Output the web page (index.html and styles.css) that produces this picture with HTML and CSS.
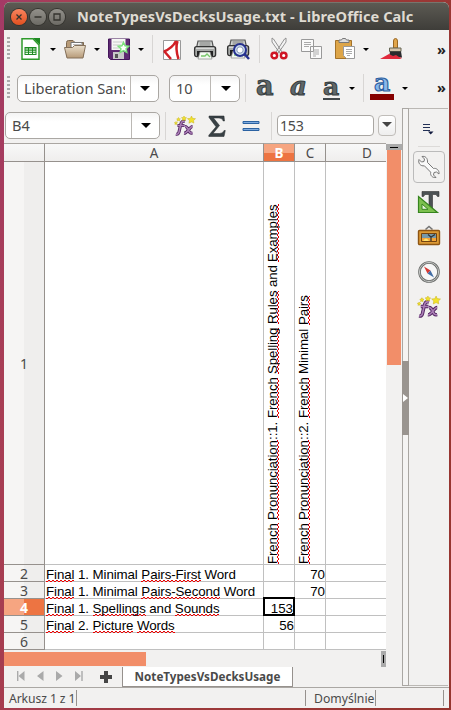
FILE: index.html
```html
<!DOCTYPE html>
<html lang="pl">
<head>
<meta charset="utf-8">
<title>NoteTypesVsDecksUsage.txt - LibreOffice Calc</title>
<link rel="stylesheet" href="styles.css">
</head>
<body>
<svg class="defs" width="0" height="0">
  <defs>
    <linearGradient id="tan" x2="0" y2="1"><stop stop-color="#eadfcb"/><stop offset="1" stop-color="#b79a78"/></linearGradient>
    <symbol id="fx" viewBox="0 0 22 22">
      <path d="M11 6.500c-3-1-4 1-4.500 4l-1.500 6.500c-.5 2-1.500 2.500-3 2M3.500 10.500h7M11 11.500c2 0 2.500 1 3.500 3.500s1.500 3.500 4 3M18.500 11.500c-3 0-5 7-8.500 6.700" fill="none" stroke="#512360" stroke-width="3.200"/>
      <path d="M11 6.500c-3-1-4 1-4.500 4l-1.500 6.500c-.5 2-1.500 2.500-3 2M3.500 10.500h7M11 11.500c2 0 2.500 1 3.500 3.500s1.500 3.500 4 3M18.500 11.500c-3 0-5 7-8.500 6.700" fill="none" stroke="#aa7fb6" stroke-width="1.500"/>
      <path d="M17.500 1l1 2.300 3 .4-2 1.900.4 2.500-2.400-1.200-2.600 1.300.5-2.600-2-2 2.900-.2zM10 1l.8 1.500 1.700.3-1.200 1.100.2 1.600L10 4.800l-1.600.7.300-1.700L7.500 2.700l1.800-.3zM4.500 2.500l.6 1.200 1.300.2-1 .9.200 1.300-1.200-.6-1.100.6.200-1.300-.9-.9 1.300-.2zM2 6.500l.5 1 1 .1-.8.8.2 1.100-1-.5-1 .5.200-1.100-.7-.8 1.100-.2z" fill="#f2e22c" stroke="#c9b41c" stroke-width=".5"/>
    </symbol>
    <symbol id="printer" viewBox="0 0 24 24">
      <path d="M5 3h14l1.500 7h-17z" fill="#d5d8d5" stroke="#555" stroke-width="1.200"/><path d="M6.500 5h11M6.500 7h11" stroke="#777"/>
      <rect x="1.600" y="8.600" width="21" height="10" rx="2" fill="#a8aaa8" stroke="#333" stroke-width="1.300"/>
      <path d="M3 10.200h18" stroke="#eee"/><path d="M4 13h16v5H4z" fill="#222"/><path d="M7 14h10l2 7H5z" fill="#f5faf3" stroke="#888" stroke-width=".7"/><path d="M8 18h4l2-2 3 3" fill="none" stroke="#77c66a" stroke-width="1.300"/>
    </symbol>
  </defs>
</svg>
<main class="window">
  <header class="titlebar">
    <span class="wbtn close"><svg viewBox="0 0 16 16"><path d="M5.500 5.500l5 5M10.500 5.500l-5 5"/></svg></span>
    <span class="wbtn"><svg viewBox="0 0 16 16"><path d="M4.500 8h7"/></svg></span>
    <span class="wbtn"><svg viewBox="0 0 16 16"><path d="M5 5h6v6H5z"/></svg></span>
    <h1>NoteTypesVsDecksUsage.txt - LibreOffice Calc</h1>
  </header>

  <div class="toolbar standard">
    <i class="grip"></i>
    <svg viewBox="0 0 24 24"><path d="M3 1.700h11L20 8v14.300H3z" fill="#fff" stroke="#2f9a2b" stroke-width="1.500"/><path d="M14 1h7v7z" fill="#1f8a22"/><path d="M5.500 10h12v8h-12z" fill="#1f8a22"/><path d="M6.500 12h2.500M10 12h3M14 12h2.500M6.500 14.200h2.500M10 14.200h3M14 14.200h2.500M6.500 16.400h2.500M10 16.400h3M14 16.400h2.500" stroke="#eaffea" stroke-width="1.100"/></svg>
    <i class="arrow"></i>
    <svg viewBox="0 0 24 24"><path d="M3.500 19V5.500q0-2 2-2H10l2 2h8.500V19z" fill="#b89b78" stroke="#7d684f"/><path d="M8 5.500h11v7H8z" fill="#fff" stroke="#777"/><path d="M10 7.500h8" stroke="#bbb"/><path d="M1.500 10.500h8l2-2h11L20 21H4z" fill="url(#tan)" stroke="#84705a"/></svg>
    <i class="arrow"></i>
    <svg viewBox="0 0 24 24"><path d="M1.500 2h21v20.500h-19l-2-2z" fill="#5f2a72" stroke="#44165a"/><path d="M4.500 2h14v11h-14z" fill="#f7f7f5"/><path d="M6 5h11M6 8h8M6 11h6" stroke="#c9c9c9"/><path d="M6 15h11v7H6z" fill="#c9c9c9"/><path d="M8 17h3v4H8z" fill="#555"/><path d="M16.500 5.500l1.600 3.300 3.600.5-2.600 2.500.7 3.600-3.300-1.700-3.300 1.700.7-3.600-2.600-2.500 3.600-.5z" fill="#fff" stroke="#7be07b" stroke-width="1.500"/></svg>
    <i class="arrow"></i>
    <i class="sep"></i>
    <svg viewBox="0 0 24 24"><path d="M3.500 3.500h17v19h-17z" fill="#fff" stroke="#999"/><path d="M4 14.500C10 12 14 8 16 4M4 14l7 8M17.500 4c-2 6-1 12 1 18" fill="none" stroke="#d12026" stroke-width="2.500"/></svg>
    <svg viewBox="0 0 24 24"><use href="#printer" width="24" height="24" y="1"/></svg>
    <svg viewBox="0 0 24 24"><use href="#printer" width="24" height="24"/><circle cx="14" cy="13" r="6" fill="#cfe0f4" fill-opacity=".9" stroke="#26318f" stroke-width="2"/><circle cx="14" cy="13" r="3.200" fill="#fff" stroke="#8396b8"/><path d="M18.500 17l4.500 5" stroke="#26318f" stroke-width="2.500"/></svg>
    <i class="sep"></i>
    <svg viewBox="0 0 24 24"><path d="M5 1l1.500 1L15 15l-2 1.500L5 5zM19 1l-1.500 1L9 15l2 1.500L19 5z" fill="#f4f4f4" stroke="#888" stroke-width=".9"/><circle cx="7.300" cy="18.500" r="2.800" fill="#fff" stroke="#cf1524" stroke-width="2.400"/><circle cx="16.700" cy="18.500" r="2.800" fill="#fff" stroke="#cf1524" stroke-width="2.400"/></svg>
    <svg viewBox="0 0 24 24"><g fill="#fafafa" stroke="#999"><path d="M1.500 2.500h12v12h-12zM10.500 9.500h11v12h-11z"/></g><path d="M4 5.500h7M4 7.500h7M4 9.500h5M13 13h6M13 15h6M13 17h6M13 19h3" stroke="#aaa"/></svg>
    <svg viewBox="0 0 24 24"><path d="M2.500 3.500h16v18h-16z" fill="#dda548" stroke="#a3722a"/><path d="M6 5V3h2.500l1-1.500h3L13.500 3H16v2.500H6z" fill="#ddd" stroke="#777"/><path d="M10.500 9.500h11v12h-8l-3-3z" fill="#fff" stroke="#999"/><path d="M13 12.500h6M13 14.500h6M13 16.500h6M14 18.500h3" stroke="#aaa"/></svg>
    <i class="arrow"></i>
    <svg viewBox="0 0 24 24"><path d="M13.500 11V4q0-2.500 2-2.500T17.500 4v7z" fill="#e1a54b" stroke="#9a6722"/><path d="M9.500 11h11.500v3.500H9.500z" fill="#d4c3aa" stroke="#665"/><path d="M10 14.500h11l1 6H9z" fill="#2a2a2d"/><path d="M9 17l4 2 3-1 3 2 3 1-2 1H0z" fill="#e12a3c"/></svg>
    <b class="more">»</b>
  </div>

  <div class="toolbar format">
    <i class="grip"></i>
    <div class="combo family"><span><em>Liberation Sans</em></span><i class="arrow big"></i></div>
    <div class="combo size"><span><em>10</em></span><i class="arrow big"></i></div>
    <i class="sep"></i>
    <span class="glyph bold">a</span>
    <span class="glyph ital">a</span>
    <span class="glyph under">a</span>
    <i class="arrow"></i>
    <i class="sep"></i>
    <span class="glyph color">a</span>
    <i class="arrow"></i>
    <b class="more">»</b>
  </div>

  <div class="workspace">
    <section class="main">
      <div class="formula">
        <div class="combo name"><span><em>B4</em></span><i class="arrow big"></i></div>
        <i class="sep"></i>
        <svg class="fx"><use href="#fx"/></svg>
        <svg class="sigma" viewBox="0 0 18 22"><path d="M1 1h15l.5 5h-1.300Q14.500 3 11 3H5.500l6 7.500L5 18.500h6.500q3.500 0 4.500-3h1.300L16 21.500H.8v-1.300L8 11.800 1 2.500z" fill="#394145" stroke="#242a2d" stroke-width=".5"/></svg>
        <svg class="equal" viewBox="0 0 18 12"><path d="M1 1.500h16v2H1zM1 8.500h16v2H1z" fill="#7fabdf" stroke="#2b62a2"/></svg>
        <i class="sep"></i>
        <div class="entry">153</div>
        <div class="drop"><i class="arrow big"></i></div>
      </div>
      <div class="sheet">
        <div class="grid">
          <div class="hd corner"></div><div class="hd">A</div><div class="hd sel">B</div><div class="hd">C</div><div class="hd cut">D</div>
          <div class="rh">1</div><div class="c"></div>
          <div class="c up"><p><u>French</u> <u>Pronunciation</u>::1. <u>French</u> <u>Spelling</u> <u>Rules</u> and <u>Examples</u></p></div>
          <div class="c up"><p><u>French</u> <u>Pronunciation</u>::2. <u>French</u> Minimal <u>Pairs</u></p></div><div class="c"></div>
          <div class="rh">2</div><div class="c t"><u>Final</u> 1. Minimal <u>Pairs-First</u> Word</div><div class="c"></div><div class="c n">70</div><div class="c"></div>
          <div class="rh">3</div><div class="c t"><u>Final</u> 1. Minimal <u>Pairs-Second</u> Word</div><div class="c"></div><div class="c n">70</div><div class="c"></div>
          <div class="rh sel">4</div><div class="c t"><u>Final</u> 1. <u>Spellings</u> and <u>Sounds</u></div><div class="c n active">153</div><div class="c"></div><div class="c"></div>
          <div class="rh">5</div><div class="c t"><u>Final</u> 2. <u>Picture</u> <u>Words</u></div><div class="c n">56</div><div class="c"></div><div class="c"></div>
          <div class="rh">6</div><div class="c"></div><div class="c"></div><div class="c"></div><div class="c"></div>
        </div>
        <div class="vscroll"><div class="vsplit"></div><div class="vthumb"></div></div>
      </div>
      <div class="hscroll"><div class="hthumb"></div><div class="hsplit"></div></div>
      <nav class="tabs">
        <svg viewBox="0 0 82 14"><path d="M9.500 2v10L3.500 7zM28.500 2v10L22 7zM41 2v10l6.500-5zM60 2v10l6-5z" fill="#aaa"/><path d="M2.700 2v10M67 2v10" stroke="#aaa" stroke-width="1.400"/></svg>
        <svg class="plus" viewBox="0 0 14 14"><path d="M5 1h4v4h4v4H9v4H5V9H1V5h4z" fill="#454545"/></svg>
        <span class="tab">NoteTypesVsDecksUsage</span>
      </nav>
    </section>
    <div class="gutter"><div class="handle"></div></div>
    <aside class="side">
      <svg class="menu" viewBox="0 0 14 12"><path d="M1 1.500h7M1 4.500h7M1 7.500h7" stroke="#223056" stroke-width="1"/><path d="M6 8.500h5.500L8.700 11.500z" fill="#10193d"/></svg>
      <hr>
      <div class="deck on"><svg viewBox="0 0 24 24"><path d="M2 4.500L4.500 7 7 6.500 7.500 4 5 1.500C8 .8 11 3 10.500 7.500l6 6c3-.8 6 2 5.500 5.500L19.500 17l-2.500.5-.5 2.500 2.500 2.500c-3.500.5-6-2-5.300-5.300l-6.300-6.400C3.500 11.500.8 8 2 4.500z" fill="#fafafa" stroke="#777"/></svg></div>
      <div class="deck"><svg viewBox="0 0 24 24"><path d="M5 1.500h17v5h-1.500L19 4.500h-3.500v14l1.500 1.500h-6l1-1.500v-14H8L6.500 6.500H5z" fill="#4c5254" stroke="#333" stroke-width=".6"/><path d="M1.500 6.500v16h19z" fill="#7cc04e" stroke="#37851f" stroke-width="1.200"/><path d="M5 14v5.300h6z" fill="#e9f5df" stroke="#37851f"/></svg></div>
      <div class="deck"><svg viewBox="0 0 24 24"><path d="M8.500 4.500l3.500-3 3.500 3" fill="none" stroke="#777" stroke-width="1.600"/><rect x="1.500" y="5.500" width="21" height="14" rx="1" fill="#dd9a35" stroke="#8d5412" stroke-width="1.400"/><path d="M4.500 8.500h15v8h-15z" fill="#7698a9" stroke="#73430f"/><path d="M5 13h14v3H5z" fill="#f4a437"/><path d="M6 16q3-5 6 0" fill="#ffe16b"/><path d="M14 16v-4l-3-2.500M14 12l4-2.500" stroke="#333" stroke-width="1.300" fill="none"/></svg></div>
      <div class="deck"><svg viewBox="0 0 24 24"><circle cx="12" cy="12" r="9.500" fill="#f7f7f7" stroke="#696b69" stroke-width="2.600"/><circle cx="12" cy="12" r="9.600" fill="none" stroke="#c7c9c7"/><path d="M7 6.500l6.500 4-3 3z" fill="#d73832"/><path d="M17 17.500l-6.500-4 3-3z" fill="#426da5"/></svg></div>
      <div class="deck"><svg><use href="#fx"/></svg></div>
    </aside>
  </div>
  <footer class="status"><span class="s1">Arkusz 1 z 1</span><span class="s2"></span><span class="s3">Domyślnie</span><span class="s4"></span></footer>
</main>
</body>
</html>
```
FILE: styles.css
```css
* { box-sizing: border-box; }
body { margin: 0; width: 451px; height: 710px; padding: 2px 2px 2px 4px; overflow: hidden; background: linear-gradient(100deg, #a33a66 0, #a83e55 12%, #9c3838 60%, #96352f 100%); font-family: "Noto Sans", sans-serif; color: #4a4a4a; }
.defs { display: block; position: absolute; }
svg { display: block; }
p, h1 { margin: 0; }
.window { height: 706px; display: flex; flex-direction: column; background: #f2f1f0; border-radius: 6px 6px 0 0; overflow: hidden; }
.titlebar { height: 28px; flex: none; display: flex; align-items: center; padding-left: 7px; background: linear-gradient(#5c5a53, #3e3d39); border-top: 1px solid #77756d; }
.wbtn { width: 16px; height: 16px; margin-right: 3px; border-radius: 50%; background: linear-gradient(#92908a, #6d6b65); box-shadow: 0 0 0 1px #35342f; }
.wbtn path { fill: none; stroke: #34332e; stroke-width: 1.3; }
.wbtn.close { background: linear-gradient(#f8845f, #e2501f); }
h1 { margin-left: 9px; font: bold 14.6px/27px "Noto Sans", sans-serif; color: #dfdbd2; white-space: nowrap; letter-spacing: .05px; }

.toolbar { flex: none; display: grid; align-items: center; }
.toolbar > svg { width: 24px; height: 24px; }
.standard { height: 38px; grid-template-columns: 15px 31px 13px 31px 13px 31px 14px 8px 33px 33px 33px 8px 33px 33px 30px 17px 57px 1fr; }
.format { height: 40px; grid-template-columns: 13px 152px 76px 11px 34px 33px 26px 14px 7px 32px 35px 1fr; }
.grip { width: 3px; height: 24px; margin-left: 3px; background: repeating-linear-gradient(#aaa 0 2px, transparent 2px 4px); }
.arrow { width: 0; height: 0; border: 3px solid transparent; border-top-color: #000; border-bottom: 0; }
.arrow.big { border-width: 5px 5px 0; }
.sep { width: 1px; height: 28px; background: #d8d6d4; }
.more { font-size: 14.5px; line-height: 20px; color: #222; }
.format .more { margin-top: -3px; }
.combo { height: 27px; display: flex; border: 1px solid #aaa7a3; border-radius: 5px; background: linear-gradient(#f4f4f4, #fff 35%); overflow: hidden; }
.combo span { flex: 1; min-width: 0; padding: 0 5px 0 6px; border-right: 1px solid #bbb8b4; font-size: 14.6px; line-height: 25px; }
.combo em { display: block; overflow: hidden; white-space: nowrap; font-style: normal; }
.combo .arrow { margin: 10px 8px 0 9px; }
.family { width: 142px; }
.size { width: 71px; }
.size .arrow { margin-left: 10px; }
.name { width: 155px; }
.glyph { font: bold 27px/24px "DejaVu Serif", serif; width: 20px; height: 26px; color: #5f6769; -webkit-text-stroke: 1px #363d40; }
.bold, .ital { transform: translateY(-1px); }
.ital { font-size: 26px; font-style: italic; }
.under { width: 17px; height: 23px; font-size: 25px; line-height: 19px; border-bottom: 2px solid #42484b; }
.color { width: 24px; height: 25px; padding-left: 4px; line-height: 15px; font-size: 25px; color: #8ab8ea; -webkit-text-stroke: 1.1px #2d5f9f; border-bottom: 6px solid #850000; transform: translateY(-1px); }

.workspace { flex: 1; min-height: 0; display: grid; grid-template-columns: 398px 7px 1fr; }
.main { display: flex; flex-direction: column; }
.formula { height: 35px; flex: none; display: flex; align-items: center; padding-left: 1px; }
.formula .sep { margin-left: 5px; }
.fx { width: 22px; height: 22px; margin: 0 12px 0 8px; }
.sigma { width: 18px; height: 22px; margin-right: 16px; }
.equal { width: 18px; height: 12px; margin-right: 6px; }
.entry { width: 97px; height: 21px; margin: 0 4px 0 5px; padding-left: 2px; border: 1px solid #aaa7a3; border-radius: 4px; background: #fff; font-size: 14.2px; line-height: 19px; letter-spacing: -.3px; }
.drop { width: 18px; height: 21px; padding: 6px 3px; border: 1px solid #c0bdb9; border-radius: 4px; background: linear-gradient(#fff, #eee); }
.drop .arrow { display: block; border-top-color: #444; }

.sheet { display: flex; height: 507px; flex: none; }
.grid { width: 382px; display: grid; grid-template-columns: 41px 219px 31px 31px 60px; grid-template-rows: 19px 403px repeat(5, 17px); }
.hd, .rh { display: flex; align-items: center; justify-content: center; font-size: 14px; line-height: 16px; color: #4a4a4a; border-right: 1px solid #96918d; border-bottom: 1px solid #96918d; background: linear-gradient(#f8f8f8, #efeeed); }
.hd { border-top: 1px solid #aaa6a2; font-size: 13.5px; }
.hd.cut { padding-left: 22px; border-right: 0; }
.rh { background: linear-gradient(90deg, #f6f5f4 50%, #efeeed 50%); padding-top: 1px; }
.hd.sel { color: #fff; font-weight: bold; background: linear-gradient(#f6a581 50%, #ed7442 50%); }
.rh.sel { color: #fff; font-weight: bold; background: linear-gradient(90deg, #f6a581 50%, #ed7442 50%); }
.c { position: relative; background: #fff; border-right: 1px solid #c0c0c0; border-bottom: 1px solid #c0c0c0; font: 13.33px/19px "Liberation Sans", sans-serif; color: #000; white-space: nowrap; }
.c:nth-child(5n) { border-right: 0; }
.t { padding-left: 1px; letter-spacing: -.1px; }
.n { text-align: right; padding-right: 0; }
u { text-decoration: none; background: linear-gradient(90deg, #e00 50%, transparent 0) 0 100%/4px 1px repeat-x, linear-gradient(90deg, transparent 50%, #e00 0) 0 calc(100% - 1px)/4px 1px repeat-x; }
.up p { writing-mode: vertical-rl; transform: rotate(180deg); height: 402px; width: 19px; line-height: 17px; letter-spacing: -.13px; }
.up u { background: linear-gradient(#e00 50%, transparent 0) 1px 0/1px 4px repeat-y, linear-gradient(transparent 50%, #e00 0) 2px 0/1px 4px repeat-y; }
.active { padding-right: 1px; }
.active::before { content: ""; position: absolute; inset: -2px -1px -1px -1px; border: 2px solid #000; }
.active::after { content: ""; position: absolute; right: -3px; bottom: -3px; width: 5px; height: 5px; background: #000; }
.vscroll { width: 16px; }
.vsplit { height: 6px; margin-top: 1px; background: #aaa linear-gradient(#000, #000) center 3px/8px 1px no-repeat; }
.vthumb { height: 215px; width: 14px; margin-left: 1px; background: #f28e69; }
.hscroll { height: 17px; flex: none; display: flex; justify-content: space-between; padding-right: 16px; }
.hthumb { width: 142px; height: 14px; margin-top: 2px; background: #f28e69; }
.hsplit { width: 5px; height: 16px; margin-top: 1px; background: #aaa linear-gradient(#000, #000) center/1px 8px no-repeat; }
.tabs { flex: 1; display: flex; align-items: flex-start; padding-left: 11px; }
.tabs svg { width: 82px; height: 14px; margin-top: 2px; }
.tabs .plus { width: 14px; margin: 3px 10px 0 2px; }
.tab { width: 171px; height: 20px; margin-left: -1px; background: #fff; border: 1px solid #96918d; border-top: 0; font-weight: bold; font-size: 11.65px; line-height: 19px; text-align: center; white-space: nowrap; }
.gutter { border: 1px solid #aaa7a3; border-width: 1px 1px 1px; height: 578px; background: #f5f4f3; }
.handle { width: 7px; height: 74px; margin: 252px 0 0 -1px; background: #99948f; display: flex; align-items: center; }
.handle::after { content: ""; margin-left: 1px; border: 4px solid transparent; border-left: 5px solid #fff; border-right: 0; }
.side { border: solid #bbb8b4; border-width: 1px 0; height: 578px; width: 39px; display: flex; flex-direction: column; align-items: center; }
.menu { width: 14px; height: 12px; margin-top: 14px; }
hr { width: 22px; height: 1px; margin: 11px 0 4px; border: 0; background: #dcdad8; flex: none; }
.deck { width: 32px; height: 32px; margin-bottom: 3px; display: grid; place-items: center; border: 1px solid transparent; border-radius: 4px; flex: none; }
.deck svg { width: 24px; height: 24px; }
.deck.on { border-color: #bbb; }
.status { height: 21px; flex: none; border-top: 1px solid #aaa7a3; display: flex; align-items: center; font-size: 12.2px; line-height: 18px; }
.status span { height: 16px; line-height: 18px; border-right: 1px solid #96918d; white-space: nowrap; }
.s1 { width: 73px; padding-left: 5px; letter-spacing: -.1px; }
.s2 { width: 229px; }
.s3 { width: 70px; padding-left: 8px; }
.s4 { width: 68px; }
```
